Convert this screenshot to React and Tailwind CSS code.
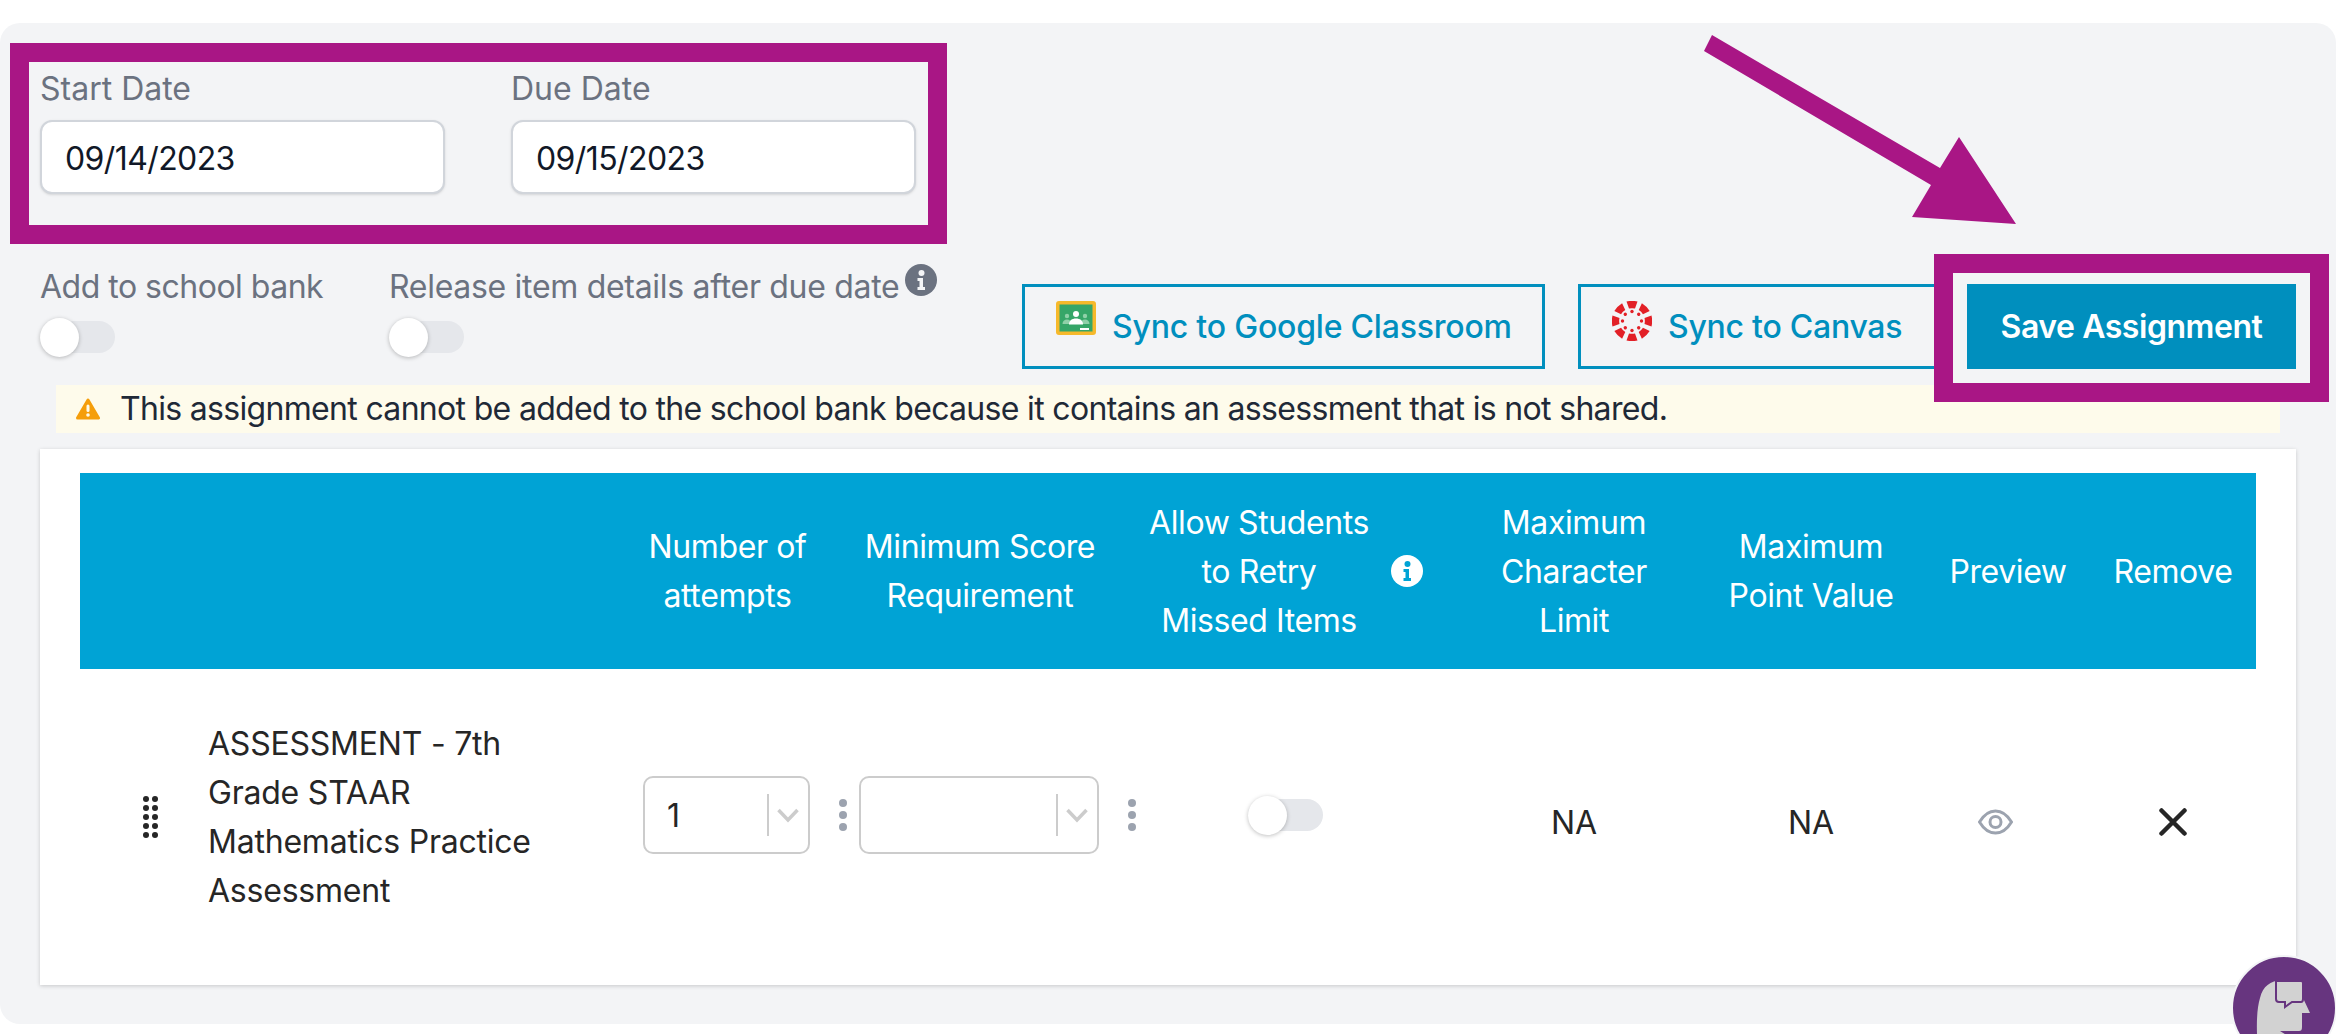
const font = { fontFamily: 'Inter, "Noto Sans", sans-serif' }

function Toggle() {
  return (
    <div className="relative h-[39px] w-[75px]">
      <div className="absolute left-0 top-[3px] h-[32px] w-[75px] rounded-full bg-[#e5e7eb]" />
      <div className="absolute left-0 top-0 h-[39px] w-[39px] rounded-full bg-white shadow-[0_1px_4px_rgba(0,0,0,0.25)]" />
    </div>
  )
}

function InfoIcon({ circle, dot }) {
  return (
    <svg width="32" height="32" viewBox="0 0 32 32" className="shrink-0">
      <circle cx="16" cy="16" r="16" fill={circle} />
      <circle cx="16.5" cy="9" r="3" fill={dot} />
      <path d="M12.5 14h5.5v9h2v3h-7.5v-3h2v-6h-2z" fill={dot} />
    </svg>
  )
}

function DateField({ label, value }) {
  return (
    <div className="w-[405px]">
      <div className="h-[49px] text-[32px] leading-[51px] text-[#6b7280]">{label}</div>
      <input
        readOnly
        value={value}
        className="mt-[8px] h-[74px] w-full rounded-[12px] border-2 border-[#d1d5db] bg-white pl-[23px] pt-[3px] text-[32px] tracking-[-0.6px] text-[#111827] shadow-sm outline-none"
      />
    </div>
  )
}

function ClassroomLogo() {
  return (
    <svg width="40" height="34" viewBox="0 0 40 34" className="mb-[17px] shrink-0">
      <rect width="40" height="34" rx="3" fill="#f6b92b" />
      <rect x="3.5" y="3.5" width="33" height="27" fill="#36a668" />
      <circle cx="20" cy="13" r="3" fill="#fff" />
      <circle cx="11" cy="15" r="2.2" fill="#8fd0a8" />
      <circle cx="29" cy="15" r="2.2" fill="#8fd0a8" />
      <path d="M6.5 23c0-3 2-4.500 4.500-4.500s4.500 1.500 4.500 4.500zM24.500 23c0-3 2-4.500 4.500-4.500s4.500 1.500 4.500 4.500z" fill="#8fd0a8" />
      <path d="M13 23.500c0-4 3-6 7-6s7 2 7 6z" fill="#fff" />
      <rect x="24" y="27" width="9" height="2" fill="#fff" />
    </svg>
  )
}

function CanvasLogo() {
  return (
    <svg width="40" height="40" viewBox="-20 -20 40 40" className="mb-[11px] shrink-0">
      {[0, 45, 90, 135, 180, 225, 270, 315].map(a => (
        <g key={a} transform={`rotate(${a})`}>
          <path d="M-5.500 -19.500Q0 -20.800 5.500 -19.500L3 -12.500Q0 -13.200 -3 -12.500Z" fill="#e22027" />
          <circle cx="0" cy="-9.500" r="1.700" fill="#e22027" />
        </g>
      ))}
    </svg>
  )
}

function DotsMenu() {
  return (
    <div className="flex flex-col gap-[4px]">
      <span className="h-[8px] w-[8px] rounded-full bg-[#9ca3af]" />
      <span className="h-[8px] w-[8px] rounded-full bg-[#9ca3af]" />
      <span className="h-[8px] w-[8px] rounded-full bg-[#9ca3af]" />
    </div>
  )
}

function SelectBox({ width, value }) {
  return (
    <div className={`flex h-[78px] items-center rounded-[10px] border-2 border-[#cccccc] bg-white ${width}`}>
      <span className="flex-1 pl-[22px] text-[32px] text-[#262626]">{value}</span>
      <span className="h-[42px] w-[2px] bg-[#cccccc]" />
      <svg width="24" height="16" viewBox="0 0 24 16" className="ml-[7px] mr-[8px]">
        <path d="M2.500 3l9.500 10 9.500-10" fill="none" stroke="#cccccc" strokeWidth="3.500" />
      </svg>
    </div>
  )
}

const gridCols = 'grid grid-cols-[556px_183px_322px_311px_244px_230px_164px_166px]'

export default function App() {
  return (
    <div className="relative h-screen overflow-hidden bg-white text-[#262626]" style={font}>
      <div className="mt-[23px] h-[1001px] rounded-[20px] bg-[#f3f4f6] pl-[40px] pr-[40px] pt-[40px]">
        {/* dates */}
        <div className="flex gap-[66px]">
          <DateField label="Start Date" value="09/14/2023" />
          <DateField label="Due Date" value="09/15/2023" />
        </div>

        {/* toggles and buttons */}
        <div className="mt-[68px] flex h-[123px] items-start">
          <div className="w-[349px]">
            <div className="text-[32px] leading-[49px] tracking-[-0.5px] text-[#6b7280]">Add to school bank</div>
            <div className="mt-[7px]"><Toggle /></div>
          </div>
          <div>
            <div className="flex items-start text-[32px] leading-[49px] tracking-[-0.3px] text-[#6b7280]">
              Release item details after due date
              <span className="ml-[6px] mt-[2px]"><InfoIcon circle="#6b7280" dot="#f3f4f6" /></span>
            </div>
            <div className="mt-[7px]"><Toggle /></div>
          </div>
          <div className="ml-auto mt-[22px] flex gap-[33px]">
            <button className="flex h-[85px] w-[523px] items-center gap-[16px] border-[3px] border-[#008fbe] pl-[31px] text-[32px] font-medium tracking-[-0.2px] text-[#008fbe]">
              <ClassroomLogo />
              Sync to Google Classroom
            </button>
            <button className="mr-[-4px] flex h-[85px] w-[360px] items-center gap-[16px] border-[3px] border-[#008fbe] pl-[31px] text-[32px] font-medium tracking-[-0.25px] text-[#008fbe]">
              <CanvasLogo />
              Sync to Canvas
            </button>
            <button className="h-[85px] w-[329px] bg-[#008fbe] text-[32px] font-semibold tracking-[-0.45px] text-white">
              Save Assignment
            </button>
          </div>
        </div>

        {/* warning */}
        <div className="ml-[16px] mr-[16px] flex h-[48px] items-center bg-[#fefbeb] pl-[20px] text-[32px] tracking-[-0.68px] text-[#1f2937]">
          <svg width="24" height="22" viewBox="0 0 24 22" className="shrink-0">
            <path d="M12 2L22.500 20H1.500z" fill="#f59e0b" stroke="#f59e0b" strokeWidth="3" strokeLinejoin="round" />
            <rect x="10.500" y="6.500" width="3" height="7.500" rx="1.500" fill="#fefbeb" />
            <circle cx="12" cy="17" r="1.800" fill="#fefbeb" />
          </svg>
          <span className="ml-[20px]">This assignment cannot be added to the school bank because it contains an assessment that is not shared.</span>
        </div>

        {/* table card */}
        <div className="mt-[16px] h-[536px] bg-white px-[40px] pt-[24px] shadow-[0_1px_4px_rgba(0,0,0,0.18)]">
          <div className={`${gridCols} h-[196px] items-center bg-[#00a3d5] text-center text-[32px] leading-[49px] tracking-[-0.4px] text-white`}>
            <div />
            <div>Number of<br />attempts</div>
            <div>Minimum Score<br />Requirement</div>
            <div className="flex items-center pl-[7px]">
              <div className="w-[222px] whitespace-nowrap">Allow Students<br />to Retry<br />Missed Items</div>
              <span className="ml-[21px]"><InfoIcon circle="#ffffff" dot="#00a3d5" /></span>
            </div>
            <div>Maximum<br />Character<br />Limit</div>
            <div>Maximum<br />Point Value</div>
            <div>Preview</div>
            <div>Remove</div>
          </div>

          <div className={`${gridCols} h-[295px] items-center text-[32px] leading-[49px]`}>
            <div className="flex items-center">
              <div className="ml-[63px] grid grid-cols-2 gap-x-[3px] gap-y-[3px]">
                {[0, 1, 2, 3, 4, 5, 6, 7, 8, 9].map(i => (
                  <span key={i} className="h-[6px] w-[6px] rounded-full bg-[#262626]" />
                ))}
              </div>
              <div className="ml-[50px] w-[340px] tracking-[-0.22px]">ASSESSMENT - 7th Grade STAAR Mathematics Practice Assessment</div>
            </div>
            <div className="mb-[3px] flex items-center">
              <div className="ml-[7px]"><SelectBox width="w-[167px]" value="1" /></div>
              <div className="ml-[29px]"><DotsMenu /></div>
            </div>
            <div className="mb-[3px] flex items-center">
              <div className="ml-[40px]"><SelectBox width="w-[240px]" value="" /></div>
              <div className="ml-[29px]"><DotsMenu /></div>
            </div>
            <div className="mb-[3px] flex justify-start pl-[107px]"><Toggle /></div>
            <div className="mt-[11px] text-center">NA</div>
            <div className="mt-[11px] text-center">NA</div>
            <div className="mt-[11px] flex justify-start pl-[52px]">
              <svg width="35" height="26" viewBox="0 0 35 26">
                <path d="M1.500 13C6 5.500 11 2 17.500 2S29 5.500 33.500 13C29 20.500 24 24 17.500 24S6 20.500 1.500 13z" fill="none" stroke="#9ca3af" strokeWidth="3" />
                <circle cx="17.500" cy="13" r="5.500" fill="none" stroke="#9ca3af" strokeWidth="3" />
              </svg>
            </div>
            <div className="mt-[11px] flex justify-center">
              <svg width="28" height="28" viewBox="0 0 28 28">
                <path d="M2.500 2.500l23 23M25.500 2.500l-23 23" fill="none" stroke="#262626" strokeWidth="4.500" strokeLinecap="round" />
              </svg>
            </div>
          </div>
        </div>
      </div>

      {/* purple annotations over the page */}
      <div className="absolute left-[10px] top-[43px] h-[201px] w-[937px] border-[19px] border-[#a91685]" />
      <div className="absolute left-[1934px] top-[254px] h-[148px] w-[395px] border-[19px] border-[#a91685]" />
      <svg className="absolute left-0 top-0" width="2336" height="300">
        <polygon points="1712,35 1940,168 1959,137 2016,224 1912,217 1931,185 1704,51" fill="#a91685" />
      </svg>

      {/* help bot */}
      <svg className="absolute left-[2230px] top-[954px]" width="108" height="108" viewBox="-2 -2 108 108">
        <circle cx="52" cy="52" r="52" fill="#67357f" stroke="#f3f4f6" strokeWidth="2" />
        <path d="M27 104C24 78 24 55 28 42C31 30 38 25 50 24H62L71 42L78 57H70V71C70 74 69 75 67 75H48L56 80V104z" fill="#d2d2d2" />
        <path d="M44 25H69C70 25 71 26 71 27V43C71 45 70 46 69 46H60L53 51V46H47C45 46 44 45 44 43z" fill="#d2d2d2" stroke="#67357f" strokeWidth="2" />
      </svg>
    </div>
  )
}
